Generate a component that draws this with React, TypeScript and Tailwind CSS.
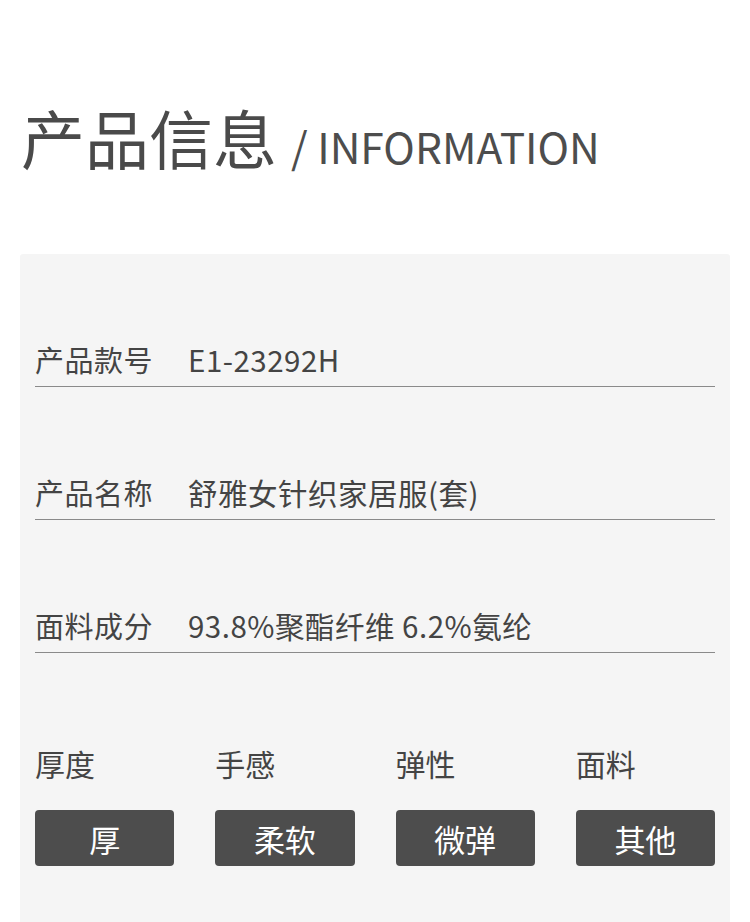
const rows = [
  { label: "产品款号", value: "E1-23292H" },
  { label: "产品名称", value: "舒雅女针织家居服(套)" },
  { label: "面料成分", value: "93.8%聚酯纤维 6.2%氨纶" },
];

const attrs = [
  { label: "厚度", value: "厚" },
  { label: "手感", value: "柔软" },
  { label: "弹性", value: "微弹" },
  { label: "面料", value: "其他" },
];

export default function App() {
  return (
    <div
      className="w-[750px] h-[922px] overflow-hidden bg-white text-[#444]"
      style={{ fontFamily: '"Noto Sans CJK SC", "Noto Sans", sans-serif' }}
    >
      {/* Title */}
      <div className="flex items-baseline pl-[21px] pt-[104px]">
        <h1 className="text-[64px] leading-none text-[#4a4a4a]">产品信息</h1>
        <span className="ml-[14px] text-[42.5px] leading-none text-[#4d4d4d]">/ INFORMATION</span>
      </div>

      {/* Info panel */}
      <div className="mx-[20px] mt-[86px] w-[710px] h-[700px] rounded-[3px] bg-[#f5f5f5] px-[15px]">
        {rows.map((r) => (
          <div
            key={r.label}
            className="flex h-[133px] items-end border-b border-[#8a8a8a] pb-[12px] text-[29px] leading-none"
          >
            <span className="w-[153px] tracking-[0.5px]">{r.label}</span>
            <span className="text-[29.5px] tracking-[0.5px]">{r.value}</span>
          </div>
        ))}

        <div className="grid grid-cols-4 gap-x-[41px] pt-[95px]">
          {attrs.map((a) => (
            <div key={a.label} className="flex flex-col">
              <span className="text-[30px] leading-none">{a.label}</span>
              <div className="mt-[32px] flex h-[56px] items-center justify-center rounded-[4px] bg-[#4d4d4d] text-[31px] leading-none text-white">
                {a.value}
              </div>
            </div>
          ))}
        </div>
      </div>
    </div>
  );
}
